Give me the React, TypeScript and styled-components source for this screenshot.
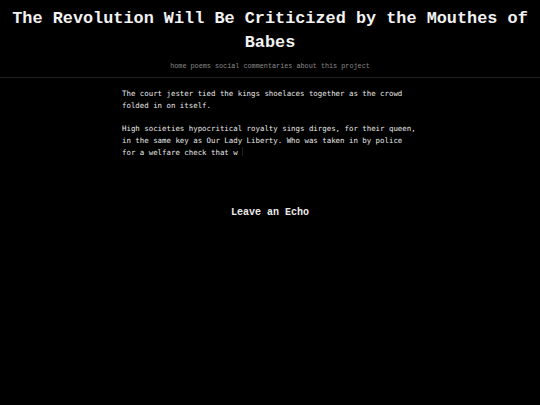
import React from 'react'
import styled, {createGlobalStyle} from 'styled-components'

const GlobalStyle = createGlobalStyle`
    html, body {
        margin: 0;
        padding: 0;
        background: #000;
    }
    body {
        color: #eee;
        font-family: "Liberation Mono", "Courier New", monospace;
    }
`

const Header = styled.header`
    text-align: center;
    padding: 7px 8px 0;
    border-bottom: 1px solid #1f1f1f;
`

const Title = styled.h1`
    margin: 0;
    font-size: 16.85px;
    line-height: 24px;
    font-weight: bold;
    color: #f2f2f2;
`

const Nav = styled.nav`
    display: flex;
    justify-content: center;
    gap: 4px;
    padding: 6px 0 6px;
    font-size: 6.8px;
    line-height: 10px;
`

const NavLink = styled.a`
    color: #8a8a8a;
    text-decoration: none;
`

const Main = styled.main`
    width: 296px;
    margin: 0 auto;
    padding-top: 10px;
`

const Poem = styled.div`
    font-family: "DejaVu Sans Mono", monospace;
    font-size: 7.4px;
    line-height: 12px;
    color: #e6e6e6;
    white-space: pre-wrap;
`

const Para = styled.p`
    margin: 0 0 11px;
`

const Cursor = styled.span`
    display: inline-block;
    width: 1px;
    height: 9px;
    vertical-align: -1px;
    background: #1c1c1c;
`

const EchoTitle = styled.h2`
    margin: 47px 0 0;
    text-align: center;
    font-size: 10px;
    line-height: 14px;
    font-weight: bold;
    color: #eaeaea;
`

const links = ['home', 'poems', 'social commentaries', 'about this project']

export default function App() {
    return (
        <>
            <GlobalStyle />
            <Header>
                <Title>The Revolution Will Be Criticized by the Mouthes of Babes</Title>
                <Nav>
                    {links.map(l => (
                        <NavLink key={l} href="#">{l}</NavLink>
                    ))}
                </Nav>
            </Header>
            <Main>
                <Poem>
                    <Para>The court jester tied the kings shoelaces together as the crowd folded in on itself.</Para>
                    <Para>
                        High societies hypocritical royalty sings dirges, for their queen, in the same key as Our Lady
                        Liberty. Who was taken in by police for a welfare check that w{' '}
                        <Cursor />
                    </Para>
                </Poem>
                <EchoTitle>Leave an Echo</EchoTitle>
            </Main>
        </>
    )
}
